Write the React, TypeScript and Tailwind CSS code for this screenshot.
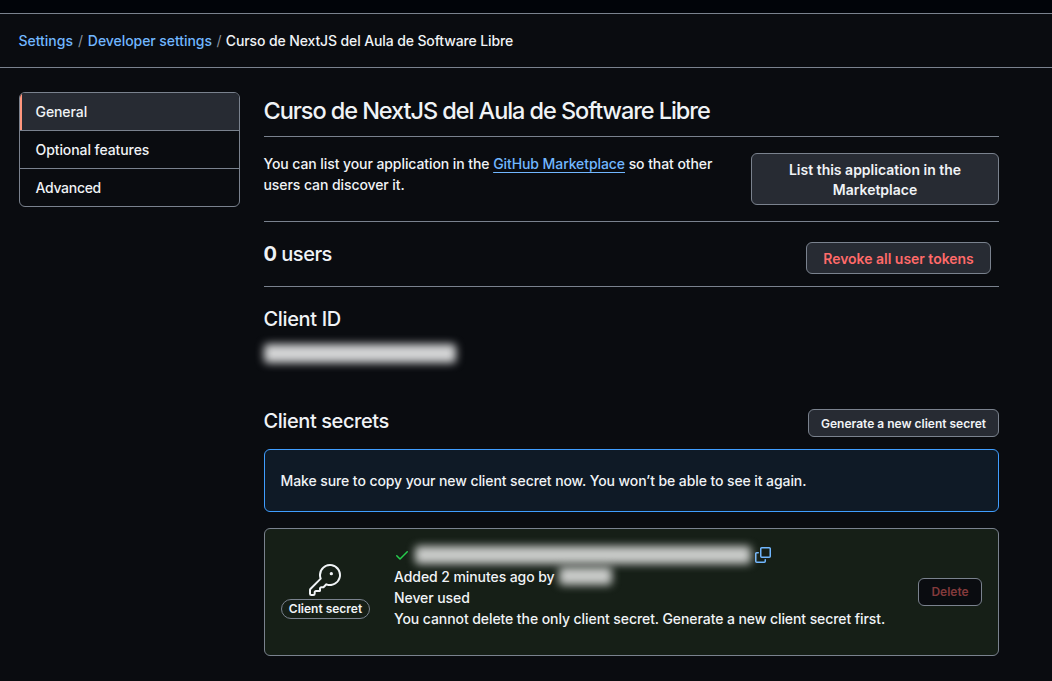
import React from "react";
import { GoKey } from "react-icons/go";

function CheckIcon() {
  return (
    <svg viewBox="0 0 16 16" className="block h-4 w-4 fill-[#26cd4d]">
      <path d="M13.78 4.22a.75.75 0 0 1 0 1.06l-7.25 7.25a.75.75 0 0 1-1.06 0L2.22 9.28a.751.751 0 0 1 .018-1.042.751.751 0 0 1 1.042-.018L6 10.94l6.72-6.72a.75.75 0 0 1 1.06 0Z" />
    </svg>
  );
}

function CopyIcon() {
  return (
    <svg viewBox="0 0 16 16" className="block h-4 w-4 fill-[#71b7ff]">
      <path d="M0 6.75C0 5.784.784 5 1.75 5h1.5a.75.75 0 0 1 0 1.5h-1.5a.25.25 0 0 0-.25.25v7.5c0 .138.112.25.25.25h7.5a.25.25 0 0 0 .25-.25v-1.5a.75.75 0 0 1 1.5 0v1.5A1.75 1.75 0 0 1 9.25 16h-7.5A1.75 1.75 0 0 1 0 14.25Z" />
      <path d="M5 1.75C5 .784 5.784 0 6.75 0h7.5C15.216 0 16 .784 16 1.75v7.5A1.75 1.75 0 0 1 14.25 11h-7.5A1.75 1.75 0 0 1 5 9.25Zm1.75-.25a.25.25 0 0 0-.25.25v7.5c0 .138.112.25.25.25h7.5a.25.25 0 0 0 .25-.25v-7.5a.25.25 0 0 0-.25-.25Z" />
    </svg>
  );
}

function Breadcrumb() {
  return (
    <nav className="flex h-[54px] items-center border-t border-[#7a828e] pl-[18.5px] tracking-[-0.12px] text-[#f0f3f6]">
      <a className="tracking-[-0.02px] text-[#71b7ff]">Settings</a>
      <span className="px-[5px] font-normal text-[#8a929d]">/</span>
      <a className="tracking-[-0.06px] text-[#71b7ff]">Developer settings</a>
      <span className="px-[4.5px] font-normal text-[#8a929d]">/</span>
      <span>Curso de NextJS del Aula de Software Libre</span>
    </nav>
  );
}

function SideMenu() {
  return (
    <nav className="h-[115px] w-[221px] shrink-0 overflow-hidden rounded-md border border-[#7a828e]">
      <a className="flex h-[38px] items-center border-b border-[#7a828e] bg-[#272b33] pl-[15.5px] shadow-[inset_2px_0_0_#ff967d]">General</a>
      <a className="flex h-[38px] items-center border-b border-[#7a828e] pl-[15.5px]">Optional features</a>
      <a className="flex h-[37px] items-center pl-[15.5px] tracking-[-0.3px]">Advanced</a>
    </nav>
  );
}

export default function App() {
  return (
    <div className="h-[681px] w-[1052px] overflow-hidden bg-[#0a0c10] font-['Inter',sans-serif] text-[14px] leading-[21px] font-[450] tracking-[-0.08px] text-[#f0f3f6]">
      <div className="h-[13px] bg-[#010409]" />
      <Breadcrumb />
      <div className="flex gap-6 border-t border-[#7a828e] pt-6 pl-[19px]">
        <SideMenu />
        <main className="w-[735px]">
          <h1 className="h-[45px] border-b border-[#7a828e] pt-px text-[23.5px] leading-9 tracking-[-1.06px] whitespace-nowrap">
            <span className="-ml-[0.5px]">Curso de NextJS del Aula de Software Libre</span>
          </h1>
          <section className="flex h-[85px] justify-between border-b border-[#7a828e] pt-4">
            <p className="-ml-[0.5px] w-[470px]">
              You can list your application in the{" "}
              <a className="text-[#71b7ff] underline underline-offset-[3px]">GitHub Marketplace</a> so that other
              <br />
              users can discover it.
            </p>
            <button className="h-[52px] w-[248px] rounded-md border border-[#7a828e] bg-[#272b33] pt-0.5 leading-5 font-semibold tracking-normal">
              List this application in the
              <br />
              Marketplace
            </button>
          </section>
          <section className="flex h-[65px] justify-between border-b border-[#7a828e] pt-5 pr-2">
            <h2 className="-ml-[0.5px] text-xl leading-6 tracking-[-0.5px]">
              <span className="font-bold">0</span> users
            </h2>
            <button className="h-8 w-[185px] rounded-md border border-[#7a828e] bg-[#272b33] font-semibold tracking-[-0.02px] text-[#ff6a69]">
              Revoke all user tokens
            </button>
          </section>
          <section className="h-[122px] pt-[18px]">
            <h2 className="-ml-[0.5px] text-xl leading-7 tracking-[-0.35px]">Client ID</h2>
            <div className="mt-[11px] h-[19px] w-[192px] rounded-sm bg-[#d3d4d5] blur-[4px]" />
          </section>
          <div className="flex h-10 justify-between">
            <h2 className="-ml-[0.5px] text-xl leading-6 tracking-[-0.42px]">Client secrets</h2>
            <button className="h-7 w-[191px] rounded-md border border-[#7a828e] bg-[#272b33] pt-0.5 text-xs font-semibold tracking-normal">
              Generate a new client secret
            </button>
          </div>
          <div className="flex h-[63px] items-center rounded-md border border-[#409eff] bg-[#0f1a26] pl-[15.5px] tracking-[-0.09px]">
            Make sure to copy your new client secret now. You won’t be able to see it again.
          </div>
          <section className="mt-4 flex h-32 items-center rounded-md border border-[#7a828e] bg-[#161f17] pr-4 pl-4">
            <div className="-mt-0.5 flex w-[89px] shrink-0 flex-col items-center">
              <GoKey size={32} className="mr-[1px]" />
              <span className="mt-[3px] flex h-5 w-[89px] items-center justify-center rounded-full border border-[#7a828e] pt-px text-xs font-semibold tracking-normal">
                Client secret
              </span>
            </div>
            <div className="-mt-3 ml-6 flex-1">
              <div className="flex h-[22px] items-center">
                <CheckIcon />
                <div className="ml-[5px] h-[18px] w-[336px] rounded-sm bg-[#c9cbc9] blur-[4px]" />
                <div className="ml-1">
                  <CopyIcon />
                </div>
              </div>
              <div className="flex items-center">
                <p>Added 2 minutes ago by</p>
                <div className="ml-1 h-[18px] w-[53px] rounded-sm bg-[#c9cbc9] blur-[4px]" />
              </div>
              <p>Never used</p>
              <p className="whitespace-nowrap">You cannot delete the only client secret. Generate a new client secret first.</p>
            </div>
            <button className="h-7 w-16 shrink-0 rounded-md border border-[#7a828e] bg-[#0a0c10] text-xs font-semibold tracking-normal text-[#843a3c]">
              Delete
            </button>
          </section>
        </main>
      </div>
    </div>
  );
}
